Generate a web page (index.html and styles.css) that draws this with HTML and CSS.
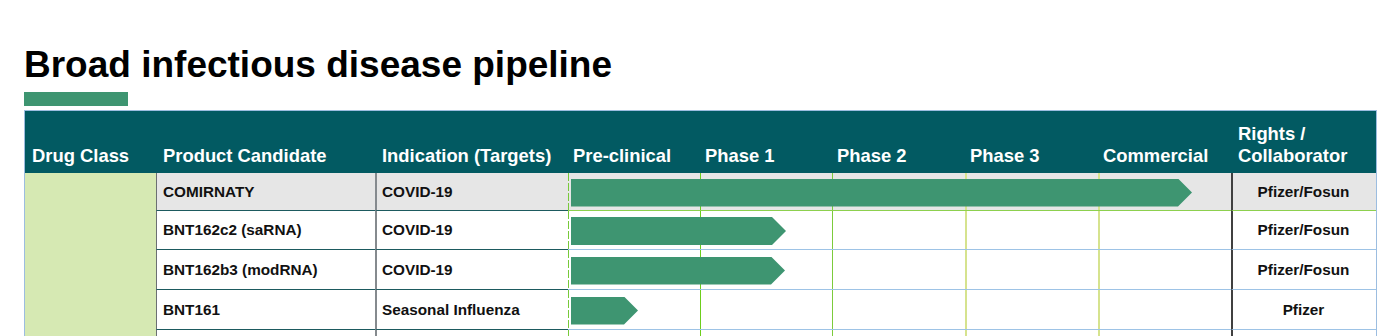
FILE: index.html
```html
<!DOCTYPE html>
<html>
<head>
<meta charset="utf-8">
<link rel="stylesheet" href="styles.css">
</head>
<body>
<div class="page">
  <h1 class="title">Broad infectious disease pipeline</h1>
  <div class="accent"></div>
  <div class="table">
    <div class="th">Drug Class</div>
    <div class="th">Product Candidate</div>
    <div class="th">Indication (Targets)</div>
    <div class="th ph">Pre-clinical</div>
    <div class="th ph">Phase 1</div>
    <div class="th ph">Phase 2</div>
    <div class="th ph">Phase 3</div>
    <div class="th ph">Commercial</div>
    <div class="th rh">Rights /<br>Collaborator</div>

    <div class="drugclass"></div>

    <div class="td prod first">COMIRNATY</div>
    <div class="td ind first">COVID-19</div>
    <div class="phases first">
      <div class="pc p0"></div><div class="pc p1"></div><div class="pc p2"></div><div class="pc p3"></div><div class="pc p4"></div>
      <div class="bar" style="width:621px"></div>
    </div>
    <div class="td rights first">Pfizer/Fosun</div>

    <div class="td prod">BNT162c2 (saRNA)</div>
    <div class="td ind">COVID-19</div>
    <div class="phases">
      <div class="pc p0"></div><div class="pc p1"></div><div class="pc p2"></div><div class="pc p3"></div><div class="pc p4"></div>
      <div class="bar" style="width:215px"></div>
    </div>
    <div class="td rights">Pfizer/Fosun</div>

    <div class="td prod">BNT162b3 (modRNA)</div>
    <div class="td ind">COVID-19</div>
    <div class="phases">
      <div class="pc p0"></div><div class="pc p1"></div><div class="pc p2"></div><div class="pc p3"></div><div class="pc p4"></div>
      <div class="bar" style="width:214px"></div>
    </div>
    <div class="td rights">Pfizer/Fosun</div>

    <div class="td prod">BNT161</div>
    <div class="td ind">Seasonal Influenza</div>
    <div class="phases">
      <div class="pc p0"></div><div class="pc p1"></div><div class="pc p2"></div><div class="pc p3"></div><div class="pc p4"></div>
      <div class="bar" style="width:67px"></div>
    </div>
    <div class="td rights">Pfizer</div>

    <div class="td prod"></div>
    <div class="td ind"></div>
    <div class="phases">
      <div class="pc p0"></div><div class="pc p1"></div><div class="pc p2"></div><div class="pc p3"></div><div class="pc p4"></div>
    </div>
    <div class="td rights"></div>
  </div>
</div>
</body>
</html>
```
FILE: styles.css
```css
* { box-sizing: border-box; }
html, body { margin: 0; padding: 0; background: #ffffff; }
body {
  font-family: "Liberation Sans", Arial, sans-serif;
  color: #000;
  overflow: hidden;
}
.page {
  padding: 43px 0 0 24px;
}
.title {
  margin: 0;
  font-size: 37px;
  line-height: 44px;
  font-weight: bold;
  color: #000;
}
.accent {
  margin-top: 5px;
  width: 104px;
  height: 14px;
  background: #3e9571;
}
.table {
  margin-top: 4px;
  width: 1353px;
  display: grid;
  grid-template-columns: 131px 219px 193px 132px 132px 133px 133px 133px 145px;
  grid-template-rows: 62px 38px 39px 40px 40px 40px;
  border-top: 1px solid #9cbde0;
  border-left: 1px solid #9cbde0;
  border-right: 1px solid #9cbde0;
}
.th {
  background: #025a62;
  color: #ffffff;
  font-size: 18.4px;
  line-height: 22px;
  font-weight: bold;
  display: flex;
  align-items: flex-end;
  padding: 0 0 6px 7px;
  white-space: nowrap;
}
.th.ph { padding-left: 5px; }
.th.rh { padding-left: 7px; }

.drugclass {
  grid-column: 1;
  grid-row: 2 / span 5;
  background: #d6e9b3;
}
.td {
  font-size: 15.3px;
  font-weight: bold;
  display: flex;
  align-items: center;
  border-bottom: 1px solid #9dc3e6;
  white-space: nowrap;
  color: #111;
}
.td.first { background: #e6e6e6; }
.prod {
  grid-column: 2;
  border-left: 1px solid #6b6f72;
  border-bottom-color: #1d5a5f;
  padding-left: 6px;
}
.ind {
  grid-column: 3;
  border-left: 2px solid #858a8e;
  border-bottom-color: #1d5a5f;
  padding-left: 5px;
}
.rights {
  grid-column: 9;
  justify-content: center;
  border-left: 2px solid #404040;
  padding-right: 2px;
}
.rights.first { border-bottom-color: #8dd04e; }

.phases {
  grid-column: 4 / span 5;
  display: grid;
  grid-template-columns: 132px 132px 133px 133px 133px;
  grid-template-rows: 100%;
  border-bottom: 1px solid #9dc3e6;
}
.phases.first {
  background: #e6e6e6;
  border-bottom-color: #8dd04e;
}
.pc { grid-row: 1; }
.p0 {
  grid-column: 1;
  background: repeating-linear-gradient(to bottom, #78c93a 0 8px, transparent 8px 10px) left top / 1px 100% no-repeat;
}
.p1 { grid-column: 2; border-left: 1px solid #6cce1c; }
.p2 { grid-column: 3; border-left: 1px solid #7ccb3b; }
.p3 { grid-column: 4; border-left: 2px solid #d6e38e; }
.p4 { grid-column: 5; border-left: 2px solid #d6e38e; }
.bar {
  grid-row: 1;
  grid-column: 1 / span 5;
  align-self: center;
  margin: 2px 0 0 3px;
  height: 28px;
  background: #3e9571;
  clip-path: polygon(0 0, calc(100% - 14px) 0, 100% 50%, calc(100% - 14px) 100%, 0 100%);
}
```
